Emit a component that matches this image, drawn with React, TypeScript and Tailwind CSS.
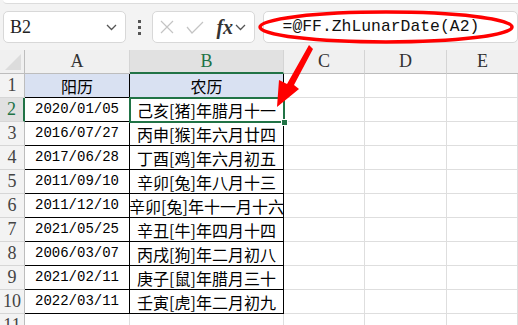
import React from 'react';

const rows: [string, string][] = [
  ['2020/01/05', '己亥[猪]年腊月十一'],
  ['2016/07/27', '丙申[猴]年六月廿四'],
  ['2017/06/28', '丁酉[鸡]年六月初五'],
  ['2011/09/10', '辛卯[兔]年八月十三'],
  ['2011/12/10', '辛卯[兔]年十一月十六'],
  ['2021/05/25', '辛丑[牛]年四月十四'],
  ['2006/03/07', '丙戌[狗]年二月初八'],
  ['2021/02/11', '庚子[鼠]年腊月三十'],
  ['2022/03/11', '壬寅[虎]年二月初九'],
];

const Chevron = () => (
  <svg width="11" height="7" viewBox="0 0 11 7">
    <path d="M1 1l4.5 4.5L10 1" fill="none" stroke="#555" strokeWidth="1.3" />
  </svg>
);

const RowHead = ({ n, active }: { n: number; active?: boolean }) => (
  <div
    className={`h-6 flex items-center justify-center border-b border-[#d6d6d6] text-[18px] font-['Liberation_Serif',serif] ${
      active ? 'bg-[#e1e1e1] text-[#217346] border-r-2 border-r-[#217346]' : 'bg-[#f3f3f3] text-[#444] border-r border-r-[#bdbdbd]'
    }`}
  >
    {n}
  </div>
);

const ColHead = ({ c, active, last }: { c: string; active?: boolean; last?: boolean }) => (
  <div
    className={`h-6 flex items-center justify-center text-[18px] font-['Liberation_Serif',serif] ${last ? '' : 'border-r border-r-[#d4d4d4]'} ${
      active ? 'bg-[#e1e1e1] text-[#217346] border-b-2 border-b-[#217346]' : 'bg-[#f0f0f0] text-[#333] border-b border-b-[#bdbdbd]'
    }`}
  >
    {c}
  </div>
);

const Empty = () => <div className="h-6 border-r border-b border-[#dedede] bg-white" />;

export default function App() {
  return (
    <div className="relative w-[518px] h-[325px] overflow-hidden bg-white">
      {/* toolbar */}
      <div className="h-[50px] bg-[#f3f3f3]">
        <div className="h-[4px] ml-[3px] bg-white rounded-bl-[4px] border-b border-[#dcdcdc]" />
        <div className="flex items-center mt-[7px] pl-[3px]">
          <div className="w-[125px] h-[32px] bg-white border border-[#d8d8d8] rounded-[5px] flex items-center justify-between pl-[6px] pr-[8px]">
            <span className="text-[18px] text-[#222] font-['Liberation_Serif',serif]">B2</span>
            <Chevron />
          </div>
          <div className="w-[27px] flex flex-col items-center gap-[3px]">
            <span className="w-[3px] h-[3px] bg-[#555]" />
            <span className="w-[3px] h-[3px] bg-[#555]" />
            <span className="w-[3px] h-[3px] bg-[#555]" />
          </div>
          <div className="w-[104px] h-[32px] bg-white border border-[#d8d8d8] rounded-[5px] flex items-center pl-[7px] gap-[12px]">
            <svg width="14" height="14" viewBox="0 0 14 14">
              <path d="M1 1l12 12M13 1L1 13" stroke="#c4c4c4" strokeWidth="1.2" />
            </svg>
            <svg width="18" height="13" viewBox="0 0 18 13">
              <path d="M1 6l5 6L17 1" fill="none" stroke="#c4c4c4" strokeWidth="1.2" />
            </svg>
            <div className="flex items-center gap-[2px]">
              <span className="text-[20px] italic font-bold text-[#333] leading-none font-['Liberation_Serif',serif]">fx</span>
              <Chevron />
            </div>
          </div>
          <div className="ml-[8px] w-[260px] h-[32px] bg-white border border-[#d8d8d8] rounded-[5px] flex items-center pl-[19px]">
            <span className="text-[16.4px] text-[#111] font-['Liberation_Mono',monospace]">=@FF.ZhLunarDate(A2)</span>
          </div>
        </div>
      </div>

      {/* grid */}
      <div className="grid grid-cols-[25px_105px_154px_81px_82px_1fr]">
        <div className="h-6 bg-[#f0f0f0] border-r border-b border-[#bdbdbd] relative overflow-hidden">
          <div className="absolute right-[3px] bottom-[3px] w-0 h-0 border-l-[16px] border-l-transparent border-b-[16px] border-b-[#dcdcdc]" />
        </div>
        <ColHead c="A" />
        <ColHead c="B" active />
        <ColHead c="C" />
        <ColHead c="D" />
        <ColHead c="E" last />

        <RowHead n={1} />
        <div className="h-6 bg-[#d9e1f2] border-r border-b border-black flex items-center justify-center text-[16px] text-black font-['Noto_Sans_CJK_SC',sans-serif]">阳历</div>
        <div className="h-6 bg-[#d9e1f2] border-r border-b border-black flex items-center justify-center text-[16px] text-black font-['Noto_Sans_CJK_SC',sans-serif]">农历</div>
        <Empty />
        <Empty />
        <Empty />

        {rows.map(([d, l], i) => (
          <React.Fragment key={d + i}>
            <RowHead n={i + 2} active={i === 0} />
            <div className="h-6 bg-white border-r border-b border-black flex items-center justify-center text-[14px] text-black font-['Liberation_Mono',monospace]">{d}</div>
            <div className="h-6 bg-white border-r border-b border-black flex items-center justify-center text-[16px] text-black whitespace-nowrap overflow-hidden font-['Noto_Sans_CJK_SC',sans-serif]">{l}</div>
            <Empty />
            <Empty />
            <Empty />
          </React.Fragment>
        ))}

        <RowHead n={11} />
        <Empty />
        <Empty />
        <Empty />
        <Empty />
        <Empty />
      </div>

      {/* selection on B2 */}
      <div className="absolute left-[129px] top-[97px] w-[156px] h-[26px] border-2 border-[#217346] pointer-events-none" />
      <div className="absolute left-[281px] top-[119px] w-[7px] h-[7px] bg-[#217346] border border-white pointer-events-none" />

      {/* red annotation */}
      <svg className="absolute left-0 top-0 pointer-events-none" width="518" height="325">
        <ellipse cx="386" cy="27" rx="126" ry="15" fill="none" stroke="#ff0000" strokeWidth="3.5" />
        <path d="M309 45 L313 49 L294 85 L299 89 L277 107 L279 80 L287 84 Z" fill="#ff0000" />
      </svg>
    </div>
  );
}
